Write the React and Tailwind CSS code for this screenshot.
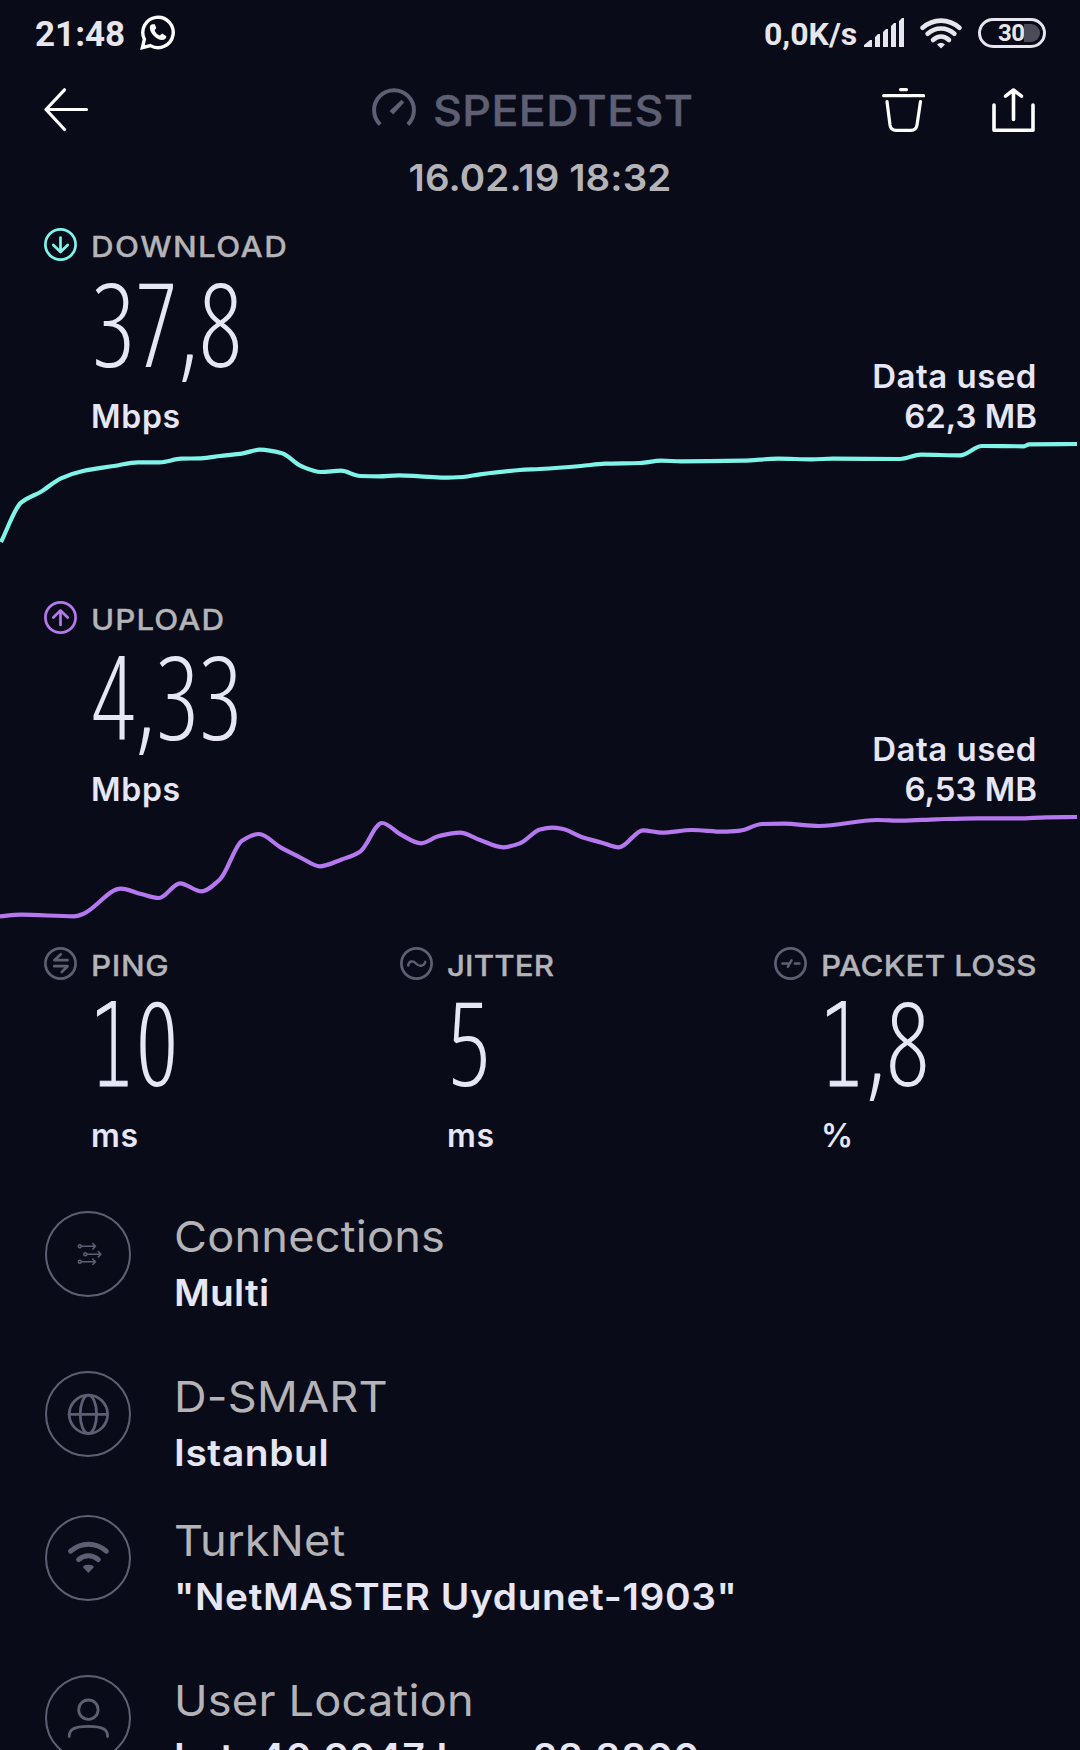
const DOWNLOAD_POINTS = [
  [1, 106], [21, 66.7], [41, 55.7], [61, 42.3], [83, 35], [114, 30], [138, 26.3], [160, 26.3],
  [181, 22.7], [201, 22.3], [220, 20], [243, 17.3], [260, 13.7], [282, 17.3], [301, 30], [321, 36],
  [341, 34.7], [360, 40], [379, 40.3], [399, 39.3], [420, 40.3], [444, 41.7], [463, 41], [480, 38.3],
  [520, 34], [540, 33], [581, 30], [605, 27.7], [640, 27], [661, 24.7], [681, 25.3], [743, 24.7],
  [778, 22.7], [812, 23.3], [833, 22.7], [900, 23], [921, 18.7], [960, 19.3], [982, 10], [1024, 10.3],
  [1029, 8.3], [1077, 8],
];

const UPLOAD_POINTS = [
  [0, 107.3], [21, 105.7], [74, 107.3], [83, 105], [121, 79.7], [141, 85], [159, 89], [180, 74.3],
  [201, 82.3], [220, 70.3], [242, 31.7], [259, 25], [281, 38.7], [300, 48.3], [320, 57.3], [341, 50.7],
  [360, 42.7], [382, 14], [401, 25.7], [421, 34.3], [439, 27], [460, 23.7], [480, 31], [503, 38.3],
  [520, 34.3], [540, 20.5], [552, 18.7], [562, 19.7], [581, 27.7], [602, 33.7], [619, 38.3], [643, 21.3],
  [662, 23.7], [692, 21], [723, 22.7], [740, 21.7], [762, 15], [784, 14.7], [819, 17], [877, 11],
  [902, 11.7], [936, 10.3], [977, 9.3], [1019, 9.3], [1046, 8.3], [1077, 8],
];

// Monotone cubic interpolation through the samples.
function smoothPath(points) {
  const slope = (a, b) => (b[1] - a[1]) / (b[0] - a[0]);
  const tangents = points.map((p, i) => {
    if (i === 0) return slope(p, points[1]);
    if (i === points.length - 1) return slope(points[i - 1], p);
    const before = slope(points[i - 1], p);
    const after = slope(p, points[i + 1]);
    return before * after <= 0 ? 0 : (2 * before * after) / (before + after);
  });
  let d = `M${points[0][0]} ${points[0][1]}`;
  for (let i = 1; i < points.length; i++) {
    const [x0, y0] = points[i - 1];
    const [x1, y1] = points[i];
    const h = (x1 - x0) / 3;
    d += `C${x0 + h} ${y0 + tangents[i - 1] * h} ${x1 - h} ${y1 - tangents[i] * h} ${x1} ${y1}`;
  }
  return d;
}

function StatusBar() {
  return (
    <div className="flex h-[68px] items-center justify-between pr-[34px] pl-[35px] font-['Roboto',sans-serif] font-bold text-[#e6e6ec]">
      <div className="flex items-center">
        <span className="w-[105px] text-[35px] leading-none">21:48</span>
        <svg className="mb-[2px] h-[36px] w-[36px] text-white" viewBox="0 0 36 36" fill="none">
          <path d="M4.400 24.200A15.200 15.200 0 1 1 10.400 30.600L2.400 32.600Z" stroke="currentColor" strokeWidth="3.400" />
          <path d="M12.5 9.200c-2.200 0-3.100 2.200-2.600 4.600 1 5 5.500 10.200 11.500 11.200 2.400.3 5-1 5-3.800l-4.200-2.600-2.400 2c-2.500-1-4.300-3-5.200-5.400l1.700-2.200-1.500-3.800z" fill="currentColor" />
        </svg>
      </div>
      <div className="flex items-center">
        <span className="w-[100px] text-[32px] leading-none">0,0K/s</span>
        <svg className="mr-4 mb-[2px] h-[30px] w-[40px]" viewBox="0 0 40 30" fill="currentColor">
          <path d="M0 29v-2l6-5h2v7zM11 29V19l3-3h2v13zM19 29V14l3-3h2v18zM27 29V8l3-3h2v24zM35 29V3l3-3h2v29z" />
        </svg>
        <svg className="mr-4 mb-[2px] h-[31px] w-[42px]" viewBox="0 0 42 31" fill="none" stroke="currentColor" strokeWidth="4.600" strokeLinecap="round">
          <path d="M2.600 9.800C13.500.2 28.500.2 39.400 9.800" />
          <path d="M7.600 15.800C15.500 8.800 26.500 8.800 34.400 15.800" />
          <path d="M13 22C18 17.500 24 17.500 29 22" />
          <path d="M17 26.500 21 30.500 25 26.500Q21 23 17 26.500Z" fill="currentColor" stroke="none" />
        </svg>
        <div className="mb-[2px] flex h-[30px] w-[68px] items-center rounded-full border-[3px] border-current pl-[17px]">
          <span className="w-[26px] text-[24px] leading-none tracking-[-0.500px]">30</span>
          <span className="h-[18px] w-[16px] rounded-r-full bg-[#4b4b59]" />
        </div>
      </div>
    </div>
  );
}

function Header() {
  return (
    <header>
      <div className="flex h-[84px] items-center justify-between pr-[44px] pl-[44px]">
        <svg className="h-[44px] w-[328px] text-white" viewBox="0 0 328 44" fill="none" stroke="currentColor" strokeWidth="3.200" strokeLinecap="round" strokeLinejoin="round">
          <path d="M2 21.500H42.500M20.500 1.800 2 21.500 20.500 41.500" />
        </svg>
        <div className="flex flex-1 items-center text-[#5f5f73]">
          <svg className="mb-[6px] h-[38px] w-[44px]" viewBox="0 0 44 38" fill="none">
            <path d="M8.200 36.500A19.900 19.900 0 1 1 35.800 36.500" stroke="currentColor" strokeWidth="4" />
            <path d="M17.600 23 29.500 11.800 32.200 14.500 21.200 26.500Z" fill="currentColor" />
          </svg>
          <h1 className="ml-[17px] origin-left scale-x-[1.04] text-[43px] leading-none font-medium tracking-[0.4px] [-webkit-text-stroke:0.4px_#5f5f73]">SPEEDTEST</h1>
        </div>
        <div className="flex gap-[67px] text-white">
          <svg className="h-[44px] w-[43px]" viewBox="0 0 43 44" fill="none" stroke="currentColor" strokeWidth="3.200" strokeLinecap="round">
            <path d="M18.500 1.600H24.500M1.700 7.700H41.500" />
            <path d="M5 13.500 8 37Q8.800 42.300 14 42.300H29Q34.200 42.300 35 37L38.500 13.500" />
          </svg>
          <svg className="h-[44px] w-[44px]" viewBox="0 0 44 44" fill="none" stroke="currentColor" strokeWidth="3.600" strokeLinecap="round" strokeLinejoin="round">
            <path d="M2 17V42.200H41V17M21.500 2V31.500M13.500 8.200 21.500 2 29.500 8.200" />
          </svg>
        </div>
      </div>
      <div className="flex h-[51px] scale-x-[1.04] items-center justify-center text-[37px] leading-none font-semibold tracking-[0.1px] text-[#b4b4b8]">
        16.02.19 18:32
      </div>
    </header>
  );
}

function RoundIcon({ className, children }) {
  return (
    <svg className={`mb-[1px] h-[33px] w-[33px] shrink-0 ${className}`} viewBox="0 0 33 33" fill="none" stroke="currentColor" strokeWidth="2.700" strokeLinecap="round" strokeLinejoin="round">
      <circle cx="16.500" cy="16.500" r="15.100" />
      {children}
    </svg>
  );
}

const ICONS = {
  download: <path d="M16.500 9.500V24M9.300 17 16.500 24 23.700 17" />,
  upload: <path d="M16.500 24V9.500M9.300 16.500 16.500 9.500 23.700 16.500" />,
  ping: <path d="M16.800 7.300 10.300 13.200H23.500M10.300 19.200H23.500L17.800 25" />,
  jitter: <path strokeWidth="2.400" d="M8.200 18.500C8.700 13.800 13 13.200 16 16.500S24 19.800 25.300 14.800" />,
  loss: <path strokeWidth="2.400" d="M8.300 16.500H14.500M17.600 13.200 13.800 19.800M20.800 16.500H25.500" />,
};

function MetricHead({ icon, color, label, spacing }) {
  return (
    <div className="flex h-[40px] items-center">
      <RoundIcon className={color}>{ICONS[icon]}</RoundIcon>
      <span className={`ml-[14px] inline-block origin-left scale-x-[1.08] pt-[3px] text-[29px] leading-none font-medium whitespace-nowrap text-[#b4b4b8] [-webkit-text-stroke:0.3px_#b4b4b8] ${spacing}`}>
        {label}
      </span>
    </div>
  );
}

function One() {
  return (
    <span className="-mr-[23px] -ml-[3px] inline-block origin-left scale-x-[0.7] font-['DejaVu_Sans_Light','DejaVu_Sans',sans-serif] leading-[0.8] font-extralight [-webkit-text-stroke:1px_#e6e6f5]">
      1
    </span>
  );
}

function Value({ children }) {
  return (
    <div className="flex h-[121px] items-center pl-[48px]">
      <span className="inline-block origin-left -translate-y-[4px] scale-x-[0.9] font-['Open_Sans',sans-serif] text-[116px] leading-none font-light tracking-[0.7px] [font-stretch:75%]">
        {children}
      </span>
    </div>
  );
}

function Unit({ children }) {
  return <div className="mt-[11px] flex h-[40px] items-center pl-[47px] text-[32px] leading-none font-semibold tracking-[0.7px]">{children}</div>;
}

function SpeedSection({ icon, color, label, spacing, value, used, points, chartClass }) {
  return (
    <section className="pt-[22px] text-[#e6e6f5]">
      <div className="flex items-end justify-between pr-[43px] pl-[44px]">
        <div>
          <MetricHead icon={icon} color={color} label={label} spacing={spacing} />
          <Value>{value}</Value>
          <Unit>Mbps</Unit>
        </div>
        <div className="origin-right scale-x-[1.03] text-right text-[32px] leading-[40px] font-semibold">
          <div className="tracking-[0.5px]">Data used</div>
          <div className="tracking-[0px]">{used}</div>
        </div>
      </div>
      <svg className={`-mt-[1px] block w-[1080px] ${chartClass} ${color}`} fill="none">
        <path d={smoothPath(points)} stroke="currentColor" strokeWidth="4.200" strokeLinejoin="round" />
      </svg>
    </section>
  );
}

function Metric({ className, icon, label, spacing, unit, children }) {
  return (
    <div className={className}>
      <MetricHead icon={icon} color="text-[#5f5f73]" label={label} spacing={spacing} />
      <Value>{children}</Value>
      <Unit>{unit}</Unit>
    </div>
  );
}

function DetailRow({ className, title, subtitle, subtitleSpacing, children }) {
  return (
    <li className={`flex ${className}`}>
      <svg className="mr-[43px] h-[86px] w-[86px] shrink-0 text-[#5f5f73]" viewBox="0 0 86 86" fill="none" stroke="currentColor" strokeWidth="2.800" strokeLinecap="round" strokeLinejoin="round">
        <circle cx="43" cy="43" r="42" strokeWidth="2" />
        {children}
      </svg>
      <div className="origin-left scale-x-[1.05] whitespace-nowrap">
        <div className="text-[43px] leading-[50px] tracking-[0.200px] text-[#b4b4b8]">{title}</div>
        <div className={`text-[37px] leading-[64px] font-semibold text-[#e6e6f5] ${subtitleSpacing}`}>{subtitle}</div>
      </div>
    </li>
  );
}

export default function App() {
  return (
    <main className="h-[1750px] w-[1080px] overflow-hidden bg-[#090b19] font-['Inter',sans-serif]">
      <StatusBar />
      <Header />
      <SpeedSection icon="download" color="text-[#7ff5ea]" label="DOWNLOAD" spacing="tracking-[1.3px]" value="37,8" used="62,3 MB" points={DOWNLOAD_POINTS} chartClass="h-[140px]" />
      <SpeedSection icon="upload" color="text-[#b678ee]" label="UPLOAD" spacing="tracking-[1px]" value="4,33" used="6,53 MB" points={UPLOAD_POINTS} chartClass="h-[113px]" />
      <section className="flex pt-[22px] pl-[44px] text-[#e6e6f5]">
        <Metric className="w-[356px]" icon="ping" label="PING" spacing="tracking-[0.6px]" unit="ms"><One />0</Metric>
        <Metric className="w-[374px]" icon="jitter" label="JITTER" spacing="tracking-[0.1px]" unit="ms">5</Metric>
        <Metric className="w-[300px]" icon="loss" label="PACKET LOSS" spacing="tracking-[0.3px]" unit="%"><One />,8</Metric>
      </section>
      <ul className="mt-[55px] pl-[45px]">
        <DetailRow className="h-[160px]" title="Connections" subtitle="Multi" subtitleSpacing="tracking-[0.2px]">
          <g strokeWidth="1.500">
            <circle cx="34.800" cy="35.300" r="1.500" />
            <path d="M36.500 35.300H50.500M47.800 32.600 50.500 35.300 47.800 38" />
            <circle cx="40.300" cy="43.200" r="1.500" />
            <path d="M42 43.200H56M53.300 40.500 56 43.200 53.300 45.900" />
            <circle cx="34.800" cy="50.800" r="1.500" />
            <path d="M36.500 50.800H50.500M47.800 48.100 50.500 50.800 47.800 53.500" />
          </g>
        </DetailRow>
        <DetailRow className="h-[144px]" title="D-SMART" subtitle="Istanbul" subtitleSpacing="tracking-[0.6px]">
          <circle cx="43.400" cy="43.300" r="19.200" />
          <ellipse cx="43.400" cy="43.300" rx="8.200" ry="19.200" />
          <path d="M24.200 43.300H62.600" />
        </DetailRow>
        <DetailRow className="h-[160px]" title="TurkNet" subtitle={'"NetMASTER Uydunet-1903"'} subtitleSpacing="tracking-[0.6px]">
          <path strokeWidth="5" d="M25.600 36.200C36 26.800 51 26.800 61.300 36.200" />
          <path strokeWidth="5" d="M33.600 44.700C39.500 39.500 47.500 39.500 53.300 44.700" />
          <path fill="currentColor" stroke="none" d="M38 52.300C38 49 48.800 49 48.800 52.300L43.400 57.900Z" />
        </DetailRow>
        <DetailRow className="h-[160px]" title="User Location" subtitle="Lat: 40.9947 Lon: 28.8800" subtitleSpacing="tracking-[0.9px]">
          <circle cx="43.400" cy="34.700" r="9.700" />
          <path d="M24.200 61.500C24.200 55 28 51.300 43.400 51.300S62.600 55 62.600 61.500" />
        </DetailRow>
      </ul>
    </main>
  );
}
